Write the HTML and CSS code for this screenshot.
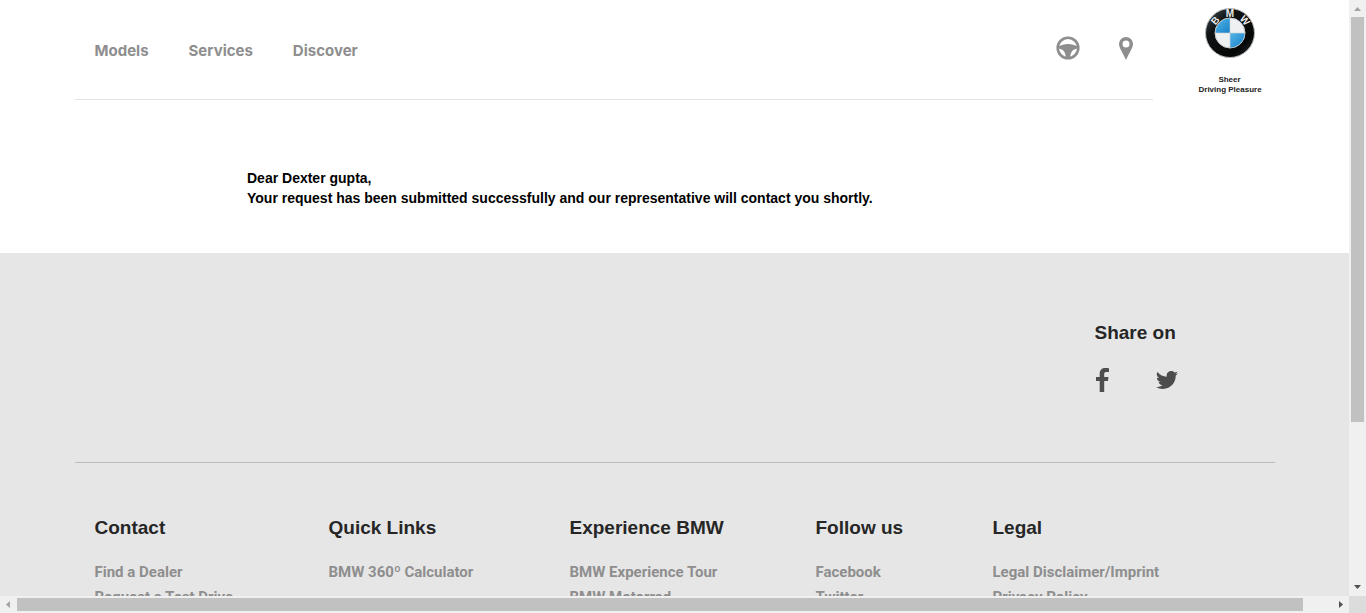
FILE: index.html
```html
<!DOCTYPE html>
<html lang="en">
<head>
<meta charset="utf-8">
<title>BMW</title>
<link rel="stylesheet" href="styles.css">
</head>
<body>
<div class="window">
  <div class="page">
    <header class="container header">
      <div class="bar">
        <nav class="nav">
          <a href="#">Models</a>
          <a href="#">Services</a>
          <a href="#">Discover</a>
        </nav>
        <div class="tools">
          <a href="#" aria-label="Test drive">
            <svg width="24" height="24" viewBox="0 0 24 24"><circle cx="12" cy="12" r="10.300" fill="none" stroke="#8e8e8e" stroke-width="2.600"/><path d="M2 9.800C6 9.600 8 8 12 8S18 9.600 22 9.800V12.500C17.500 12.800 14.500 15 14.200 22H9.800C9.500 15 6.500 12.800 2 12.500Z" fill="#8e8e8e"/></svg>
          </a>
          <a href="#" aria-label="Find a dealer">
            <svg width="14" height="23" viewBox="0 0 14 23"><path fill="#8e8e8e" fill-rule="evenodd" d="M7 0a7 7 0 0 1 7 7c0 4-3.500 8-7 16C3.500 15 0 11 0 7a7 7 0 0 1 7-7Zm0 3.500a3.500 3.500 0 1 0 0 7 3.500 3.500 0 0 0 0-7Z"/></svg>
          </a>
        </div>
      </div>
      <a class="brand" href="#">
        <svg width="50" height="50" viewBox="0 0 50 50" aria-label="BMW">
          <defs>
            <linearGradient id="ring" x1="0" y1="0" x2="1" y2="1"><stop offset="0" stop-color="#4b5357"/><stop offset=".3" stop-color="#101314"/><stop offset=".75" stop-color="#050606"/><stop offset="1" stop-color="#33393b"/></linearGradient>
            <linearGradient id="blue" x1="0" y1="0" x2="1" y2="1"><stop offset="0" stop-color="#55b4e6"/><stop offset="1" stop-color="#1682c8"/></linearGradient>
          </defs>
          <circle cx="25" cy="25" r="24.500" fill="url(#ring)" stroke="#b6bbbd"/>
          <circle cx="25" cy="25" r="15" fill="#eef0f1" stroke="#c5cacc"/>
          <path d="M25 25V10.500A14.500 14.500 0 0 0 10.500 25Z" fill="url(#blue)"/>
          <path d="M25 25V39.500A14.500 14.500 0 0 0 39.500 25Z" fill="url(#blue)"/>
          <path d="M25 10V40M10 25H40" stroke="#cfd5d8" stroke-width=".6"/>
          <g class="logo-letters">
            <text x="25" y="9" transform="rotate(-50 25 25)">B</text>
            <text x="25" y="9">M</text>
            <text x="25" y="9" transform="rotate(50 25 25)">W</text>
          </g>
        </svg>
        <span class="slogan">Sheer<br>Driving Pleasure</span>
      </a>
    </header>
    <main class="message">
      <p>Dear Dexter gupta,</p>
      <p>Your request has been submitted successfully and our representative will contact you shortly.</p>
    </main>
    <footer class="footer">
      <div class="container">
        <section class="share">
          <div class="share-box">
            <h2>Share on</h2>
            <div class="share-links">
              <a href="#" aria-label="Facebook"><svg width="14" height="24" viewBox="0 0 14 24"><path transform="translate(1)" fill="#4d4d4d" d="M3.700 24V13H0V8.900H3.700V5.700C3.700 2 6 0 9.300 0 10.900 0 12.300.1 13 .2V4.100H10.400C8.600 4.100 8.200 5 8.200 6.300V8.900H12.500L11.900 13H8.200V24Z"/></svg></a>
              <a href="#" aria-label="Twitter"><svg width="22" height="18" viewBox="0 0 24 19.500"><path fill="#4d4d4d" d="M24 2.300a9.800 9.800 0 0 1-2.800.8A5 5 0 0 0 23.300.4a9.900 9.900 0 0 1-3.100 1.200 4.900 4.900 0 0 0-8.400 4.500A14 14 0 0 1 1.700.9a4.900 4.900 0 0 0 1.500 6.600 4.900 4.900 0 0 1-2.200-.6v.1a4.900 4.900 0 0 0 3.900 4.800 4.900 4.900 0 0 1-2.200.1 4.900 4.900 0 0 0 4.600 3.400A9.900 9.900 0 0 1 0 17.300a13.900 13.900 0 0 0 7.500 2.200c9.100 0 14-7.500 14-14v-.6A10 10 0 0 0 24 2.300Z"/></svg></a>
            </div>
          </div>
        </section>
        <div class="links">
          <section><h2>Contact</h2><a href="#">Find a Dealer</a><a href="#">Request a Test Drive</a></section>
          <section><h2>Quick Links</h2><a href="#">BMW 360º Calculator</a></section>
          <section><h2>Experience BMW</h2><a href="#">BMW Experience Tour</a><a href="#">BMW Motorrad</a></section>
          <section><h2>Follow us</h2><a href="#">Facebook</a><a href="#">Twitter</a></section>
          <section><h2>Legal</h2><a href="#">Legal Disclaimer/Imprint</a><a href="#">Privacy Policy</a></section>
        </div>
      </div>
    </footer>
  </div>
  <div class="scroll scroll-y">
    <svg class="arrow" viewBox="0 0 17 17"><path d="M5 11L8.500 7 12 11Z" fill="#a3a3a3"/></svg>
    <div class="track"><div class="thumb"></div></div>
    <svg class="arrow" viewBox="0 0 17 17"><path d="M5 6H12L8.500 10Z" fill="#505050"/></svg>
  </div>
  <div class="scroll scroll-x">
    <svg class="arrow" viewBox="0 0 17 17"><path d="M10 5V12L6 8.500Z" fill="#a3a3a3"/></svg>
    <div class="track"><div class="thumb"></div></div>
    <svg class="arrow" viewBox="0 0 17 17"><path d="M7 5V12L11 8.500Z" fill="#505050"/></svg>
  </div>
  <div class="corner"></div>
</div>
</body>
</html>
```
FILE: styles.css
```css
* { box-sizing: border-box; }
body { margin: 0; font-family: "Liberation Sans", Arial, sans-serif; background: #fff; }
h2, p { margin: 0; }
a { color: #8e8e8e; text-decoration: none; }
svg { display: block; }

.window { display: grid; grid-template: minmax(0, 1fr) 17px / minmax(0, 1fr) 17px; height: 100vh; }
.page { overflow: hidden; }
.container { max-width: 1200px; margin: 0 auto; }

.header { display: flex; align-items: flex-start; }
.bar { flex: 1; display: flex; justify-content: space-between; align-items: center; height: 100px; padding: 0 20px; border-bottom: 1px solid #e3e3e3; }
.nav { display: flex; gap: 40px; padding-top: 2px; font: bold 15px/20px Inter, sans-serif; }
.tools { display: flex; align-items: center; gap: 39px; padding-bottom: 3px; }
.brand { width: 122px; padding: 8px 0 0 46px; display: flex; flex-direction: column; align-items: flex-start; gap: 17px; }
.brand svg { margin-left: 6px; }
.logo-letters { fill: #e8eaea; font: bold 10px "Liberation Sans", sans-serif; text-anchor: middle; }
.slogan { width: 62px; color: #222; font: bold 8px/10px "Liberation Sans", sans-serif; text-align: center; white-space: nowrap; }

.message { padding: 68px 247px 45px; font-size: 14px; font-weight: bold; line-height: 20px; color: #000; }

.footer { background: #e6e6e6; min-height: 400px; }
.share { display: flex; justify-content: flex-end; padding: 67px 96px 70px 0; border-bottom: 1px solid #bbb; }
h2 { color: #262626; font: bold 19px/26px "Liberation Sans", Arial, sans-serif; white-space: nowrap; }
.share-box { width: 84px; }
.share-links { display: flex; align-items: center; gap: 47px; padding-top: 22px; }
.links { display: grid; grid-template-columns: 234fr 241fr 246fr 177fr 282fr; padding: 52px 0 0 20px; }
.links section { display: flex; flex-direction: column; align-items: flex-start; }
.links h2 { margin-bottom: 19px; }
.links a { font: bold 15px/25px Roboto, sans-serif; white-space: nowrap; }

.scroll { display: flex; background: #f0f0f0; }
.scroll-y { flex-direction: column; }
.arrow { width: 17px; height: 17px; flex: none; }
.track { flex: 1; display: flex; }
.scroll-y .track { padding: 0 2px; }
.scroll-x .track { padding: 2px 0; }
.thumb { background: #c1c1c1; }
.scroll-y .thumb { width: 100%; height: 72%; }
.scroll-x .thumb { width: 97.8%; }
.corner { background: #dcdcdc; }
```
